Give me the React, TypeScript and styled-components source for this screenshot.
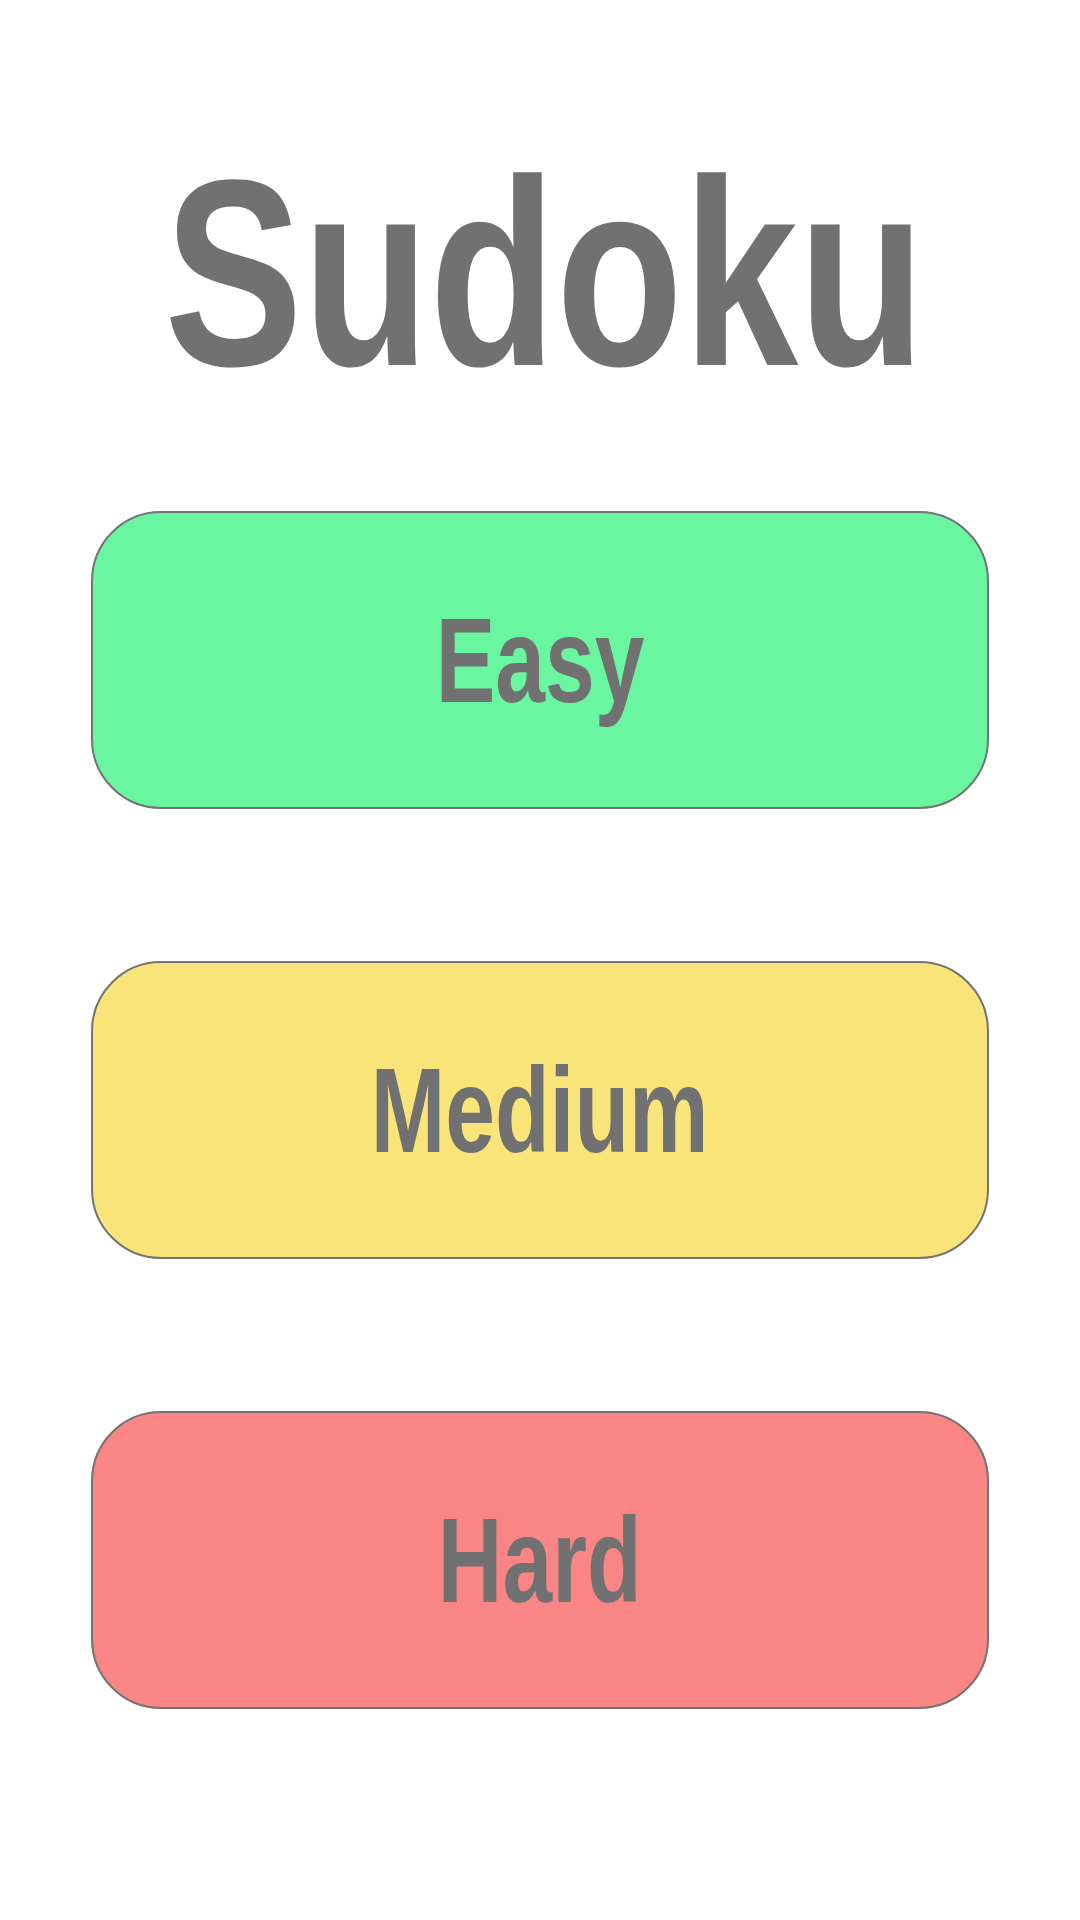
import React from "react";
import styled, { createGlobalStyle } from "styled-components";

const GlobalStyle = createGlobalStyle`
  html, body {
    margin: 0;
    padding: 0;
    background: #ffffff;
    font-family: "Liberation Sans", Arial, sans-serif;
  }
`;

// Page column
const Page = styled.div`
  width: 1080px;
  min-height: 1920px;
  display: flex;
  flex-direction: column;
  align-items: center;
  padding-top: 140px;
  box-sizing: border-box;
`;

// Big condensed heading
const Title = styled.h1`
  margin: 0;
  height: 266px;
  font-size: 266px;
  line-height: 1;
  font-weight: 700;
  color: #717171;
  transform: translateX(5px) scaleX(0.78);
  white-space: nowrap;
`;

const Levels = styled.div`
  margin-top: 105px;
  display: flex;
  flex-direction: column;
  gap: 152px;
`;

// Difficulty button
const LevelButton = styled.button<{ $bg: string }>`
  width: 898px;
  height: 298px;
  box-sizing: border-box;
  border: 2.5px solid #737373;
  border-radius: 70px;
  background-color: ${(p) => p.$bg};
  display: flex;
  align-items: center;
  justify-content: center;
  padding: 0;
  cursor: pointer;
  font-family: "Liberation Sans", Arial, sans-serif;
`;

const Label = styled.span`
  display: inline-block;
  font-size: 120px;
  line-height: 1;
  font-weight: 700;
  color: #717171;
  transform: scaleX(0.745);
  white-space: nowrap;
`;

const levels = [
  { name: "Easy", color: "#6af5a0" },
  { name: "Medium", color: "#f9e47a" },
  { name: "Hard", color: "#fa8585" },
];

export default function App() {
  return (
    <>
      <GlobalStyle />
      <Page>
        <Title>Sudoku</Title>
        <Levels>
          {levels.map((level) => (
            <LevelButton key={level.name} $bg={level.color}>
              <Label>{level.name}</Label>
            </LevelButton>
          ))}
        </Levels>
      </Page>
    </>
  );
}
